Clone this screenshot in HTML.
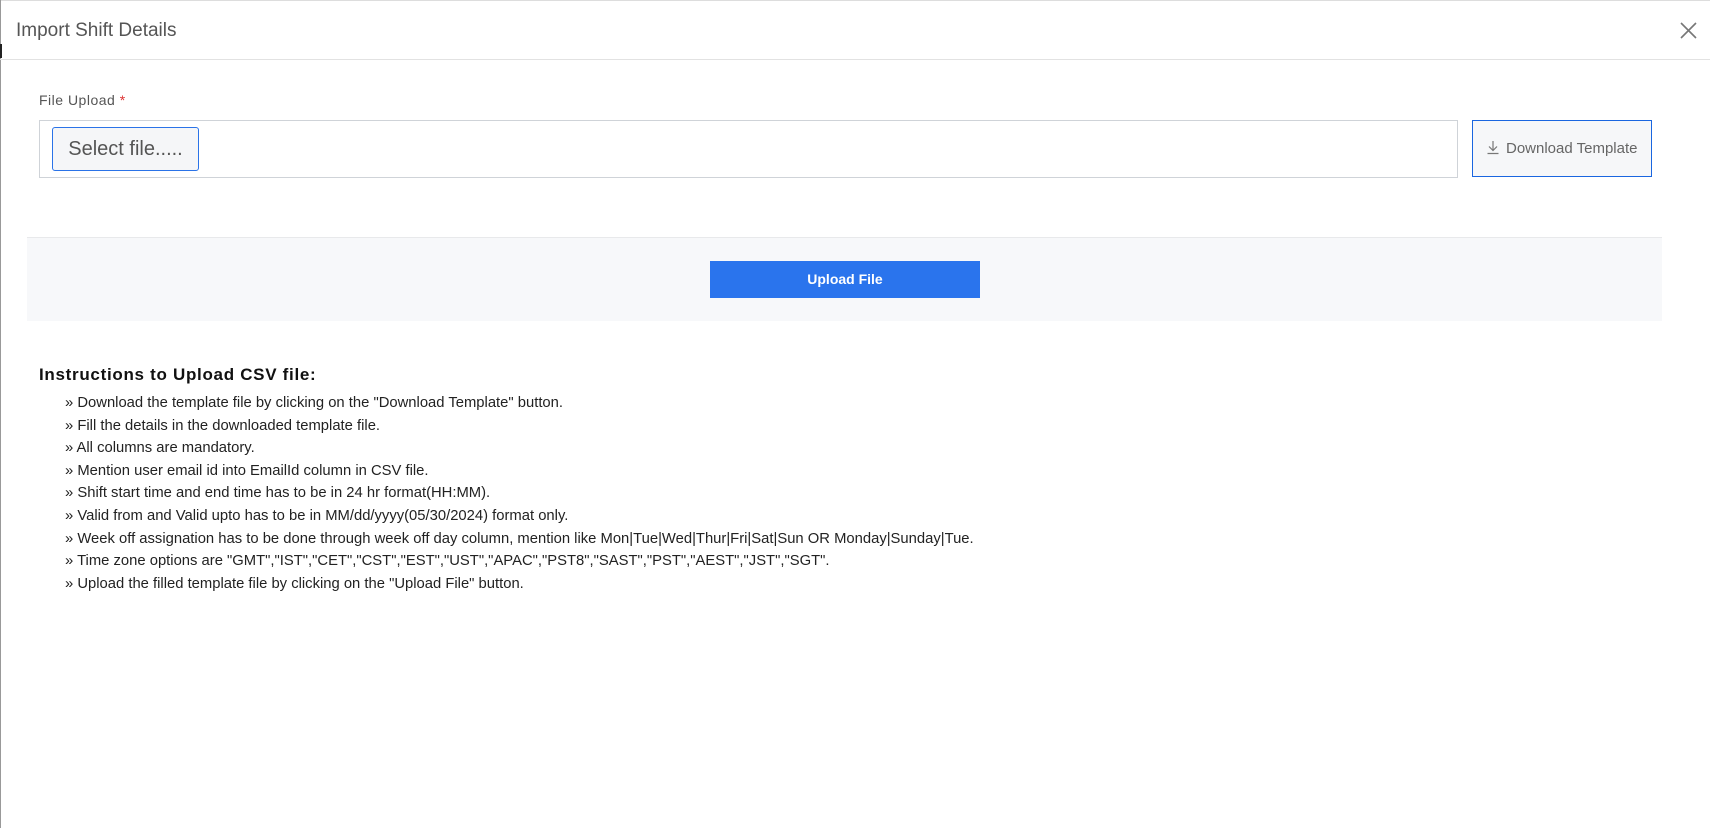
<!DOCTYPE html>
<html><head><meta charset="utf-8"><style>
*{margin:0;padding:0;box-sizing:border-box}
body{width:1710px;height:828px;background:#fff;font-family:"Liberation Sans",Arial,sans-serif;position:relative;overflow:hidden;color:#222}
.abs{position:absolute}
</style></head><body>
<div class="abs" style="left:0;top:0;width:1710px;height:1px;background:#ddd"></div>
<div class="abs" style="left:0;top:0;width:1px;height:828px;background:#999"></div>
<div class="abs" style="left:0;top:44px;width:2px;height:14px;background:#222"></div>
<div class="abs" style="left:16px;top:20px;font-size:19px;color:#555;line-height:22px">Import Shift Details</div>
<svg class="abs" style="left:1680px;top:22px" width="17" height="17" viewBox="0 0 17 17"><path d="M1 1L16 16M16 1L1 16" stroke="#777" stroke-width="1.6"/></svg>
<div class="abs" style="left:0;top:59px;width:1710px;height:1px;background:#e2e2e2"></div>

<div class="abs" style="left:39px;top:92px;font-size:14px;color:#555;letter-spacing:0.5px;line-height:16px">File Upload <span style="color:#d33">*</span></div>
<div class="abs" style="left:39px;top:120px;width:1419px;height:58px;border:1px solid #cfd3d8"></div>
<div class="abs" style="left:52px;top:127px;width:147px;height:44px;border:1px solid #2a73e8;border-radius:3px;background:#f5f6f8;font-size:20px;color:#555;line-height:42px;text-align:center">Select file.....</div>

<div class="abs" style="left:1472px;top:120px;width:180px;height:57px;border:1px solid #1a66e0;background:#f6f7f9;font-size:15px;color:#666;line-height:55px;padding-left:33px">Download Template</div>
<svg class="abs" style="left:1486px;top:140px" width="14" height="15" viewBox="0 0 14 15"><path d="M7 1V10M3 6.5L7 10.5L11 6.5M1.5 13.5H12.5" stroke="#777" stroke-width="1.2" fill="none"/></svg>

<div class="abs" style="left:27px;top:237px;width:1635px;height:84px;background:#f7f8fa;border-top:1px solid #e8e9eb"></div>
<div class="abs" style="left:710px;top:261px;width:270px;height:37px;background:#2a74ed;color:#fff;font-size:14px;font-weight:bold;text-align:center;line-height:37px">Upload File</div>

<div class="abs" style="left:39px;top:365px;font-size:17px;font-weight:bold;color:#111;line-height:20px;letter-spacing:0.7px">Instructions to Upload CSV file:</div>
<div class="abs" style="left:65px;top:392px;font-size:14.8px;color:#222;line-height:22.6px">
<div>» Download the template file by clicking on the "Download Template" button.</div>
<div>» Fill the details in the downloaded template file.</div>
<div>» All columns are mandatory.</div>
<div>» Mention user email id into EmailId column in CSV file.</div>
<div>» Shift start time and end time has to be in 24 hr format(HH:MM).</div>
<div>» Valid from and Valid upto has to be in MM/dd/yyyy(05/30/2024) format only.</div>
<div>» Week off assignation has to be done through week off day column, mention like Mon|Tue|Wed|Thur|Fri|Sat|Sun OR Monday|Sunday|Tue.</div>
<div>» Time zone options are "GMT","IST","CET","CST","EST","UST","APAC","PST8","SAST","PST","AEST","JST","SGT".</div>
<div>» Upload the filled template file by clicking on the "Upload File" button.</div>
</div>
</body></html>
